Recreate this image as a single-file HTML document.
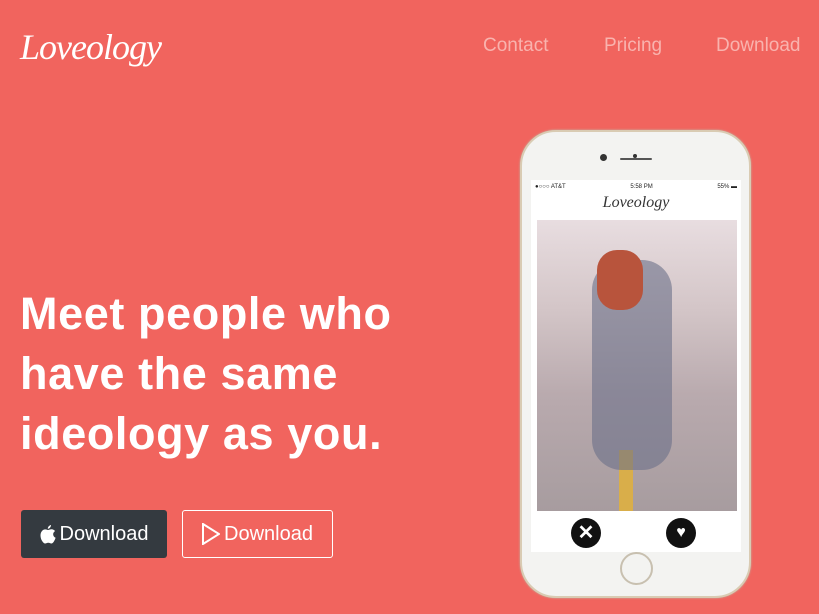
<!DOCTYPE html>
<html><head><style>
*{margin:0;padding:0;box-sizing:border-box}
body{width:819px;height:614px;overflow:hidden;background:#f1645e;font-family:"Liberation Sans",sans-serif;position:relative}
.logo{position:absolute;left:20px;top:26px;font-family:"Liberation Serif",serif;font-style:italic;font-size:36px;color:#fff;letter-spacing:-1px}
.nav a{position:absolute;top:35px;color:#f9b3ae;font-size:19px;text-decoration:none}
h1{position:absolute;left:20px;top:284px;color:#fff;font-size:45px;font-weight:900;line-height:60px;letter-spacing:0.6px}
.btn{position:absolute;top:510px;height:48px;border-radius:3px;color:#fff;font-size:20px;display:flex;align-items:center;justify-content:center;gap:4px}
.b1{left:21px;width:146px;background:#343a40}
.b2{left:182px;width:151px;border:1px solid #fff}
.phone{position:absolute;left:520px;top:130px;width:231px;height:468px;border-radius:36px;background:#f3f3f1;border:2px solid #d9cbb3;box-shadow:0 0 2px #bba}
.screen{position:absolute;left:9px;top:48px;width:210px;height:372px;background:#fff}
.photo{position:absolute;left:6px;top:40px;width:200px;height:291px;background:linear-gradient(180deg,#e8dde0 0%,#d4c6c8 30%,#b9aaae 60%,#a79c9f 100%)}
</style></head><body>
<div class="logo">Loveology</div>
<div class="nav"><a style="left:483px">Contact</a><a style="left:604px">Pricing</a><a style="left:716px">Download</a></div>
<h1>Meet people who<br>have the same<br>ideology as you.</h1>
<div class="btn b1"><svg width="16" height="19" viewBox="0 0 16 19"><path d="M11 0C11 2 9.5 3.8 7.8 3.8 7.7 2 9.3 0.3 11 0ZM8 5C9 5 10.3 4.2 11.6 4.3 12.3 4.3 14 4.6 15 6.1 12.2 7.8 12.8 11.6 15.6 12.7 15 14.6 13.3 18.5 11.4 18.5 10.2 18.5 9.8 17.8 8.3 17.8 6.8 17.8 6.3 18.5 5.2 18.5 3.3 18.5 0.5 14.6 0.5 10.5 0.5 6.6 3 4.4 5.2 4.4 6.4 4.4 7.2 5 8 5Z" fill="#fff"/></svg>Download</div>
<div class="btn b2"><svg width="18" height="22" viewBox="0 0 18 22"><path d="M1 1L17 11L1 21Z" fill="none" stroke="#fff" stroke-width="2"/></svg>Download</div>
<div class="phone">
 <div style="position:absolute;left:111px;top:22px;width:4px;height:4px;border-radius:50%;background:#333"></div>
 <div style="position:absolute;width:7px;height:7px;border-radius:50%;background:#333;top:22px;left:78px"></div>
 <div style="position:absolute;left:98px;top:26px;width:32px;height:2px;background:#555;border-radius:1px"></div>
 <div class="screen">
  <div style="font-size:6px;color:#222;padding:4px 4px;display:flex;justify-content:space-between"><span>●○○○ AT&amp;T</span><span>5:58 PM</span><span>55% ▬</span></div>
  <div style="text-align:center;font-family:'Liberation Serif',serif;font-style:italic;font-size:16px;color:#333">Loveology</div>
  <div class="photo">
   <div style="position:absolute;left:82px;top:230px;width:14px;height:61px;background:#d9ae4a"></div>
   <div style="position:absolute;left:55px;top:40px;width:80px;height:210px;border-radius:30px;background:#6a6f88;opacity:.6"></div>
   <div style="position:absolute;left:60px;top:30px;width:46px;height:60px;border-radius:20px;background:#b8543c"></div>
  </div>
  <div style="position:absolute;left:40px;top:338px;width:30px;height:30px;border-radius:50%;background:#111;color:#fff;font-weight:bold;font-size:20px;text-align:center;line-height:30px">✕</div>
  <div style="position:absolute;left:135px;top:338px;width:30px;height:30px;border-radius:50%;background:#111;color:#fff;font-size:16px;text-align:center;line-height:30px">♥</div>
 </div>
 <div style="position:absolute;left:98px;top:420px;width:33px;height:33px;border-radius:50%;border:2px solid #c8c0b0"></div>
</div>
</body></html>
